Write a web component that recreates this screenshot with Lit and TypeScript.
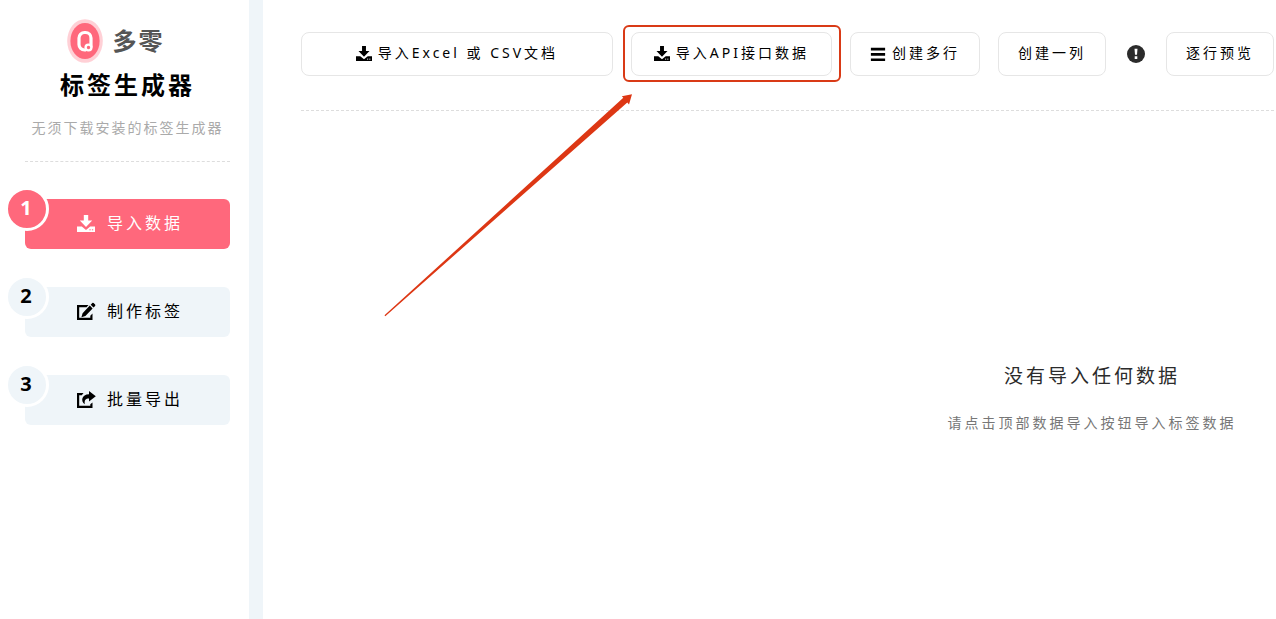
import { LitElement, html, css, svg } from "lit";
import { customElement, property } from "lit/decorators.js";

const icons: Record<string, unknown> = {
  download: svg`<path d="M6.800 0h4.400v5.500h4L9 12 2.800 5.500h4zM0 11.500h4.800L9 15l4.200-3.500H18V17H0z"/><path d="M12.400 14.800h1.300M14.900 14.800h1.300" stroke="var(--hole)" stroke-width="1"/>`,
  edit: svg`<path d="M11.500 2H0v15h15.500v-6.500L13.300 12.700v2.100H2.200V4.200h7.300z"/><path d="M12.800 2.600l2.800 2.800-7.200 7.600-4 1.200 1.200-4zM13.700 1.700L15.300.1a1 1 0 0 1 1.300 0l1.500 1.500a1 1 0 0 1 0 1.300L16.500 4.500z"/>`,
  share: svg`<path d="M6.500 2H0v15h15.500v-5.500l-2.200 1.800v1.500H2.200V4.200h2.600z"/><path d="M12 0l6.800 5.200L12 10.400V7.400C8.600 7.400 7.200 9 7.800 13.200 3.400 10.400 4.600 3.200 12 3.200z"/>`,
  menu: svg`<path d="M1 2h16v3H1zM1 8h16v3H1zM1 14h16v3H1z"/>`,
  alert: svg`<circle cx="9" cy="9" r="9"/><path d="M7.500 3.800h3l-.5 6h-2zM7.700 11.300h2.600v2.600H7.700z" fill="#fff"/>`,
};

@customElement("ui-icon")
class UiIcon extends LitElement {
  @property() name = "";
  static styles = css`
    :host { display: inline-flex; flex: none; }
    svg { width: 100%; height: 100%; fill: currentColor; overflow: visible; }
  `;
  render() {
    return html`<svg viewBox="0 0 18 18" aria-hidden="true">${icons[this.name]}</svg>`;
  }
}

const steps = [
  { icon: "download", label: "导入数据" },
  { icon: "edit", label: "制作标签" },
  { icon: "share", label: "批量导出" },
];

@customElement("app-root")
class AppRoot extends LitElement {
  static styles = css`
    :host {
      display: flex;
      min-height: 100vh;
      overflow: hidden;
      background: #fff;
      color: #000;
      font-family: "Noto Sans", "Noto Sans CJK SC", sans-serif;
      --hole: #fff;
    }
    * { box-sizing: border-box; }
    button { font: inherit; color: inherit; letter-spacing: inherit; cursor: pointer; white-space: nowrap; }
    .sidebar {
      flex: none;
      width: 263px;
      padding: 18px 19px 0 25px;
      border-right: 14px solid #eff5f9;
    }
    .brand { text-align: center; padding-bottom: 21px; border-bottom: 1px dashed #ddd; }
    .logo { display: flex; justify-content: center; align-items: center; gap: 10px; height: 46px; padding-right: 24px; }
    .logo-mark { width: 36px; height: 44px; }
    .logo-name { font-size: 24px; line-height: 32px; font-weight: 700; letter-spacing: 2px; color: #555; }
    .title { margin: 0; font-size: 24px; line-height: 42px; font-weight: 700; letter-spacing: 3px; }
    .desc { margin: 10px 0 0; font-size: 14px; line-height: 24px; letter-spacing: 2px; color: #aaa; white-space: nowrap; }
    .steps { display: grid; gap: 38px; list-style: none; margin: 37px 0 0; padding: 0; }
    .step { position: relative; }
    .label { padding-bottom: 4px; }
    .step-button {
      display: flex;
      align-items: center;
      gap: 12px;
      width: 100%;
      height: 50px;
      padding: 0 0 0 52px;
      border: 0;
      border-radius: 6px;
      background: #eff5f9;
      font-size: 16px;
      letter-spacing: 3px;
    }
    .step-icon { width: 18px; height: 18px; }
    .badge {
      position: absolute;
      left: -20px;
      top: -12px;
      width: 44px;
      height: 44px;
      padding-right: 2px;
      border: 3px solid #fff;
      border-radius: 50%;
      background: #eff5f9;
      font-size: 20px;
      line-height: 36px;
      font-weight: 700;
      text-align: center;
    }
    .active .step-button, .active .badge { background: #ff687c; color: #fff; }
    .active .step-icon { --hole: #ff687c; }
    .main { flex: 1; min-width: 0; padding: 32px 2px 0 38px; }
    .toolbar {
      display: flex;
      align-items: center;
      gap: 18px;
      padding-bottom: 34px;
      border-bottom: 1px dashed #ddd;
    }
    .tool {
      display: flex;
      align-items: center;
      justify-content: center;
      gap: 6px;
      height: 44px;
      padding: 0 19px;
      border: 1px solid #e6e6e6;
      border-radius: 8px;
      background: #fff;
      font-size: 14px;
      letter-spacing: 3px;
    }
    .grow { flex: 1; }
    .wide { padding: 0 22px; }
    .tool-icon { width: 16px; height: 16px; }
    .hint { display: flex; padding: 0 3px; border: 0; background: none; color: #2b2b2b; }
    .hint-icon { width: 18px; height: 18px; }
    .marked { position: relative; }
    .frame { position: absolute; inset: -7px -9px -6px -8px; border: 2px solid #d93a16; border-radius: 6px; pointer-events: none; }
    .arrow { position: absolute; left: -250px; top: 60px; width: 254px; height: 228px; pointer-events: none; }
    .scroller { overflow: hidden; }
    .sheet { width: 1582px; padding-top: 248px; text-align: center; }
    .empty-title { margin: 0; font-size: 19px; line-height: 34px; font-weight: 400; letter-spacing: 3px; color: #2b2b2b; }
    .empty-text { margin: 18px 0 0; font-size: 14px; line-height: 24px; letter-spacing: 3px; color: #777; }
  `;

  render() {
    return html`
      <aside class="sidebar">
        <header class="brand">
          <div class="logo">
            <svg class="logo-mark" viewBox="0 0 36 44" aria-hidden="true">
              <ellipse cx="18" cy="22" rx="17.800" ry="21.800" fill="#ffd0d6" />
              <ellipse cx="18" cy="22" rx="14.600" ry="18" fill="#ff687c" />
              <path d="M19 31H17.500a5.500 5.500 0 0 1-5.500-5.500v-6.500a5.500 5.500 0 0 1 5.500-5.500h1a5.500 5.500 0 0 1 5.500 5.500v9.500" fill="none" stroke="#fff" stroke-width="3.200" />
              <circle cx="21.500" cy="28.500" r="2.900" fill="#ff687c" stroke="#fff" stroke-width="2.400" />
            </svg>
            <span class="logo-name">多零</span>
          </div>
          <h1 class="title">标签生成器</h1>
          <p class="desc">无须下载安装的标签生成器</p>
        </header>
        <ol class="steps">
          ${steps.map((s, i) => html`
            <li class="step ${i === 0 ? "active" : ""}">
              <button class="step-button" type="button">
                <ui-icon class="step-icon" name=${s.icon}></ui-icon>
                <span class="label">${s.label}</span>
              </button>
              <span class="badge">${i + 1}</span>
            </li>`)}
        </ol>
      </aside>
      <main class="main">
        <div class="toolbar">
          <button class="tool grow" type="button"><ui-icon class="tool-icon" name="download"></ui-icon><span class="label">导入Excel 或 CSV文档</span></button>
          <div class="marked">
            <button class="tool wide" type="button"><ui-icon class="tool-icon" name="download"></ui-icon><span class="label">导入API接口数据</span></button>
            <span class="frame"></span>
            <svg class="arrow" viewBox="0 0 254 228" aria-hidden="true">
              <path d="M3.500 223.300 242.300 5.800 240.800 4.200 251 2.200 248 12.600 246.300 10.400 4.300 224.200z" fill="#dd3714" />
            </svg>
          </div>
          <button class="tool" type="button"><ui-icon class="tool-icon" name="menu"></ui-icon><span class="label">创建多行</span></button>
          <button class="tool" type="button"><span class="label">创建一列</span></button>
          <button class="hint" type="button" aria-label="提示"><ui-icon class="hint-icon" name="alert"></ui-icon></button>
          <button class="tool" type="button"><span class="label">逐行预览</span></button>
        </div>
        <div class="scroller">
          <section class="sheet">
            <h2 class="empty-title">没有导入任何数据</h2>
            <p class="empty-text">请点击顶部数据导入按钮导入标签数据</p>
          </section>
        </div>
      </main>
    `;
  }
}
